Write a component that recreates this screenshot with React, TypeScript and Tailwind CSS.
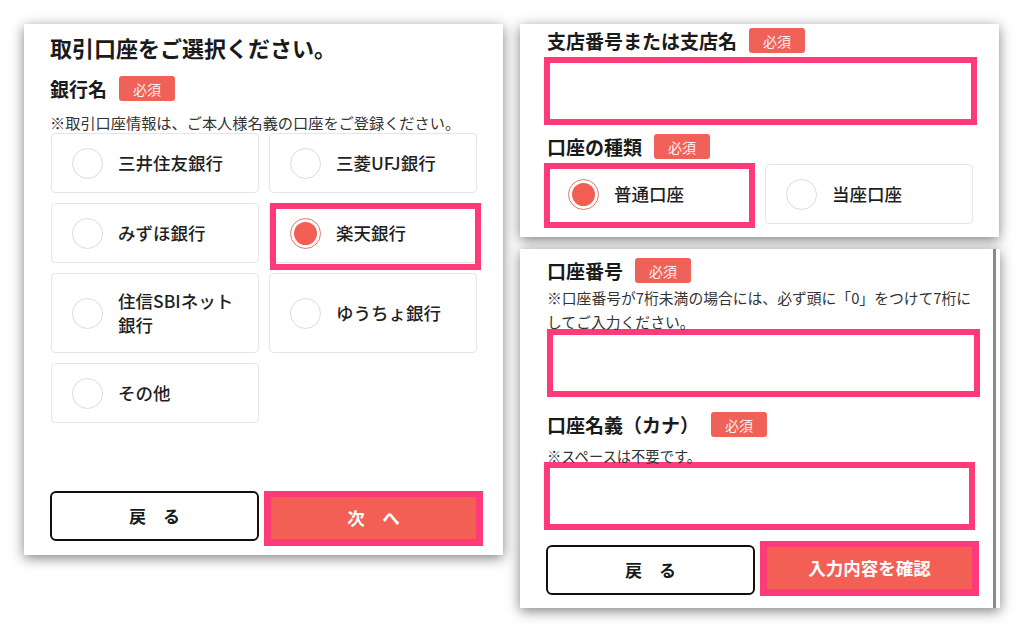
import React from 'react';

const font = { fontFamily: '"Noto Sans CJK JP", "Noto Sans", sans-serif' };

function Badge() {
    return (
        <span className="ml-[12px] inline-flex h-[25px] w-[56px] items-center justify-center rounded-[3px] bg-[#f0615a] text-[14px] leading-none text-[#fff3f1]">
            必須
        </span>
    );
}

function Label({ text }: { text: string }) {
    return (
        <div className="flex h-[25px] items-center">
            <span className="text-[19px] font-bold leading-none text-[#1a1a1a]">{text}</span>
            <Badge />
        </div>
    );
}

function Radio({ checked }: { checked?: boolean }) {
    if (checked) {
        return (
            <span className="flex h-[31px] w-[31px] shrink-0 items-center justify-center rounded-full border-[1.5px] border-[#e0776f]">
                <span className="h-[23px] w-[23px] rounded-full bg-[#f25e54]" />
            </span>
        );
    }
    return <span className="h-[31px] w-[31px] shrink-0 rounded-full border-[1.5px] border-[#dcdcdc]" />;
}

function Option({
    label,
    checked,
    tall,
    mark,
}: {
    label: React.ReactNode;
    checked?: boolean;
    tall?: boolean;
    mark?: string;
}) {
    return (
        <div
            className={`relative flex items-center rounded-[4px] border border-[#e6e6e6] bg-white pl-[20px] ${
                tall ? 'h-[80px]' : 'h-[60px]'
            }`}
        >
            <Radio checked={checked} />
            <span className="ml-[15px] text-[17.5px] font-medium leading-[24px] text-[#1f1f1f]">{label}</span>
            {/* pink annotation frame */}
            {mark && <div className={`pointer-events-none absolute border-[6px] border-[#ff3a78] ${mark}`} />}
        </div>
    );
}

function BackButton({ className = '' }: { className?: string }) {
    return (
        <button
            className={`flex h-[50px] w-[209px] items-center justify-center rounded-[6px] border-2 border-[#111] bg-white text-[17px] font-bold text-[#1a1a1a] ${className}`}
        >
            戻　る
        </button>
    );
}

function PrimaryButton({ children }: { children: React.ReactNode }) {
    return (
        <div className="h-[55px] w-[219px] border-x-[7px] border-t-[6px] border-b-[7px] border-[#ff3a78]">
            <button className="flex h-full w-full items-center justify-center bg-[#f35f55] text-[17.5px] font-bold text-white">
                {children}
            </button>
        </div>
    );
}

function PinkInput({ className = '' }: { className?: string }) {
    return <div className={`h-[68px] border-[6px] border-[#ff3a78] bg-white ${className}`} />;
}

export default function App() {
    return (
        <div style={font} className="flex h-[633px] w-[1024px] items-start bg-white pl-[24px] pt-[24px]">
            {/* Left: bank selection */}
            <div className="flex h-[531px] w-[479px] flex-col bg-white pb-[9px] pl-[26px] pr-[20px] pt-[9px] shadow-[0_3px_12px_rgba(0,0,0,0.5)]">
                <h1 className="text-[22px] font-bold leading-[28px] text-[#1a1a1a]">取引口座をご選択ください。</h1>
                <div className="mt-[15px]">
                    <Label text="銀行名" />
                </div>
                <p className="mt-[11px] whitespace-nowrap text-[15.2px] leading-[20px] text-[#333]">
                    ※取引口座情報は、ご本人様名義の口座をご登録ください。
                </p>
                <div className="ml-[1px] mt-[1px] grid w-[426px] grid-cols-2 gap-[10px]">
                    <Option label="三井住友銀行" />
                    <Option label="三菱UFJ銀行" />
                    <Option label="みずほ銀行" />
                    <Option label="楽天銀行" checked mark="left-0 -top-px -right-[5px] -bottom-[8px]" />
                    <Option
                        tall
                        label={
                            <>
                                住信SBIネット
                                <br />
                                銀行
                            </>
                        }
                    />
                    <Option tall label="ゆうちょ銀行" />
                    <Option label="その他" />
                </div>
                <div className="mt-auto flex items-start gap-[5px]">
                    <BackButton />
                    <PrimaryButton>次　へ</PrimaryButton>
                </div>
            </div>

            <div className="ml-[17px] flex w-[480px] flex-col gap-[12px]">
                {/* Right top: branch + account type */}
                <div className="h-[213px] w-[479px] bg-white pl-[27px] pr-[22px] pt-[4px] shadow-[0_3px_12px_rgba(0,0,0,0.5)]">
                    <Label text="支店番号または支店名" />
                    <PinkInput className="-ml-[3px] mt-[4px] h-[67px] w-[433px]" />
                    <div className="mt-[9px]">
                        <Label text="口座の種類" />
                    </div>
                    <div className="mt-[5px] grid w-[426px] grid-cols-2 gap-[10px]">
                        <Option label="普通口座" checked mark="-left-[4px] -top-[2px] -right-px -bottom-[5px]" />
                        <Option label="当座口座" />
                    </div>
                </div>

                {/* Right bottom: account number + holder */}
                <div className="h-[359px] w-[480px] bg-white pr-[4px] shadow-[0_3px_12px_rgba(0,0,0,0.5)]">
                    <div className="h-full border-r-[3px] border-[#8a8a8a] pl-[27px] pr-[13px] pt-[9px]">
                        <Label text="口座番号" />
                        <p className="mt-[3px] h-[41px] whitespace-nowrap text-[14.8px] leading-[24px] text-[#333]">
                            ※口座番号が7桁未満の場合には、必ず頭に「0」をつけて7桁に
                            <br />
                            してご入力ください。
                        </p>
                        <PinkInput className="mt-[2px] w-[433px]" />
                        <div className="mt-[15px]">
                            <Label text="口座名義（カナ）" />
                        </div>
                        <p className="mt-[12px] text-[14.3px] leading-[14px] text-[#333]">※スペースは不要です。</p>
                        <PinkInput className="-ml-[3px] mt-[-1px] w-[431px]" />
                        <div className="-ml-[1px] mt-[11px] flex items-start gap-[5px]">
                            <BackButton className="mt-[4px]" />
                            <PrimaryButton>入力内容を確認</PrimaryButton>
                        </div>
                    </div>
                </div>
            </div>
        </div>
    );
}
